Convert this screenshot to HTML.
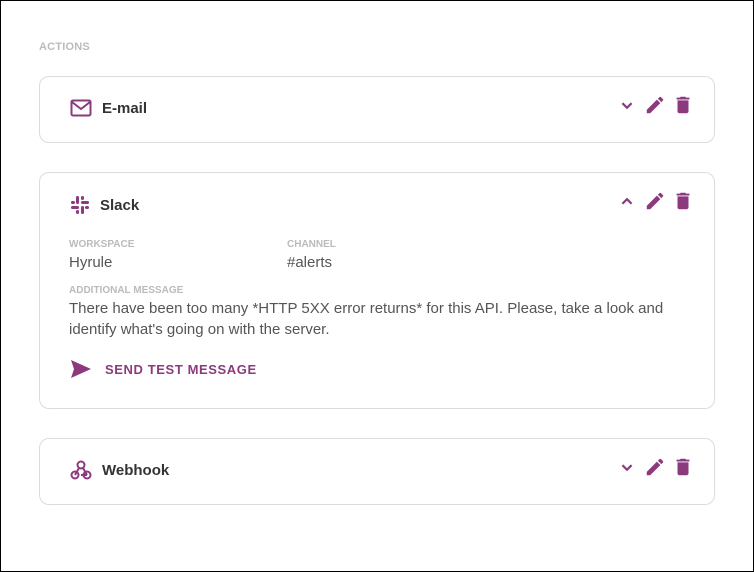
<!DOCTYPE html><html><head><style>
*{box-sizing:border-box;margin:0;padding:0}
body{width:754px;height:572px;border:1px solid #000;background:#fff;font-family:"Liberation Sans",Roboto,sans-serif;position:relative;overflow:hidden}
.lbl{position:absolute;left:38px;top:40px;font-size:11px;font-weight:bold;color:#bbb;letter-spacing:.2px}
.card{position:absolute;left:38px;width:676px;border:1px solid #dcdcdc;border-radius:10px}
.hd{position:absolute;left:30px;top:22px;height:20px;display:flex;align-items:center}
.hd span{font-weight:bold;font-size:15px;color:#333;margin-left:10px}
.ic{position:absolute;right:20px;top:18px;display:flex;align-items:center;gap:6px}
.p{fill:#8b3a7e}
.k{position:absolute;font-size:10px;font-weight:bold;color:#bbb}
.v{position:absolute;font-size:15px;color:#555}
</style></head><body>
<div class="lbl">ACTIONS</div>

<div class="card" style="top:75px;height:67px">
<div class="hd" style="top:21px"><svg width="22" height="18" viewBox="0 0 22 18"><rect x="1.5" y="1.5" width="19" height="15" rx="1.5" fill="none" stroke="#8b3a7e" stroke-width="2"/><path d="M2 3l9 7 9-7" fill="none" stroke="#8b3a7e" stroke-width="2"/></svg><span>E-mail</span></div>
<div class="ic" style="top:17px"><svg width="22" height="22" viewBox="0 0 24 24"><path d="M7 10l5 5 5-5" fill="none" stroke="#8b3a7e" stroke-width="2.4"/></svg><svg width="22" height="22" viewBox="0 0 24 24"><path class="p" d="M3 17.25V21h3.75L17.81 9.94l-3.75-3.75L3 17.25zM20.71 7.04a1 1 0 000-1.41l-2.34-2.34a1 1 0 00-1.41 0l-1.83 1.83 3.75 3.75 1.83-1.83z"/></svg><svg width="22" height="22" viewBox="0 0 24 24"><path class="p" d="M6 19c0 1.1.9 2 2 2h8c1.1 0 2-.9 2-2V7H6v12zM19 4h-3.5l-1-1h-5l-1 1H5v2h14V4z"/></svg></div>
</div>

<div class="card" style="top:171px;height:237px">
<div class="hd" style="top:22px"><svg width="20" height="20" viewBox="0 0 20 20"><g class="p"><rect x="6" y="1" width="3" height="8" rx="1.5"/><rect x="11" y="11" width="3" height="8" rx="1.5"/><rect x="1" y="11" width="8" height="3" rx="1.5"/><rect x="11" y="6" width="8" height="3" rx="1.5"/><rect x="1" y="6" width="4" height="3" rx="1.5"/><rect x="15" y="11" width="4" height="3" rx="1.5"/><rect x="11" y="1" width="3" height="4" rx="1.5"/><rect x="6" y="15" width="3" height="4" rx="1.5"/></g></svg><span>Slack</span></div>
<div class="ic" style="top:17px"><svg width="22" height="22" viewBox="0 0 24 24"><path d="M7 15l5-5 5 5" fill="none" stroke="#8b3a7e" stroke-width="2.4"/></svg><svg width="22" height="22" viewBox="0 0 24 24"><path class="p" d="M3 17.25V21h3.75L17.81 9.94l-3.75-3.75L3 17.25zM20.71 7.04a1 1 0 000-1.41l-2.34-2.34a1 1 0 00-1.41 0l-1.83 1.83 3.75 3.75 1.83-1.83z"/></svg><svg width="22" height="22" viewBox="0 0 24 24"><path class="p" d="M6 19c0 1.1.9 2 2 2h8c1.1 0 2-.9 2-2V7H6v12zM19 4h-3.5l-1-1h-5l-1 1H5v2h14V4z"/></svg></div>
<div class="k" style="left:29px;top:66px">WORKSPACE</div><div class="v" style="left:29px;top:81px">Hyrule</div>
<div class="k" style="left:247px;top:66px">CHANNEL</div><div class="v" style="left:247px;top:81px">#alerts</div>
<div class="k" style="left:29px;top:112px">ADDITIONAL MESSAGE</div>
<div class="v" style="left:29px;top:125px;width:620px;line-height:21px">There have been too many *HTTP 5XX error returns* for this API. Please, take a look and identify what's going on with the server.</div>
<div style="position:absolute;left:30px;top:186px;display:flex;align-items:center"><svg width="22" height="20" viewBox="0 0 22 20"><path class="p" d="M1 1l20 9-20 9 3-9z"/></svg><span style="margin-left:13px;font-size:13px;font-weight:bold;color:#8b3a7e;letter-spacing:.6px">SEND TEST MESSAGE</span></div>
</div>

<div class="card" style="top:437px;height:67px">
<div class="hd" style="top:21px"><svg width="22" height="22" viewBox="0 0 22 22"><g fill="none" stroke="#8b3a7e" stroke-width="2"><circle cx="11" cy="6" r="3.5"/><circle cx="5" cy="16" r="3.5"/><circle cx="17" cy="16" r="3.5"/><path d="M9 9l-4 7M11 16h6M13 9l4 7"/></g></svg><span>Webhook</span></div>
<div class="ic" style="top:17px"><svg width="22" height="22" viewBox="0 0 24 24"><path d="M7 10l5 5 5-5" fill="none" stroke="#8b3a7e" stroke-width="2.4"/></svg><svg width="22" height="22" viewBox="0 0 24 24"><path class="p" d="M3 17.25V21h3.75L17.81 9.94l-3.75-3.75L3 17.25zM20.71 7.04a1 1 0 000-1.41l-2.34-2.34a1 1 0 00-1.41 0l-1.83 1.83 3.75 3.75 1.83-1.83z"/></svg><svg width="22" height="22" viewBox="0 0 24 24"><path class="p" d="M6 19c0 1.1.9 2 2 2h8c1.1 0 2-.9 2-2V7H6v12zM19 4h-3.5l-1-1h-5l-1 1H5v2h14V4z"/></svg></div>
</div>
</body></html>
